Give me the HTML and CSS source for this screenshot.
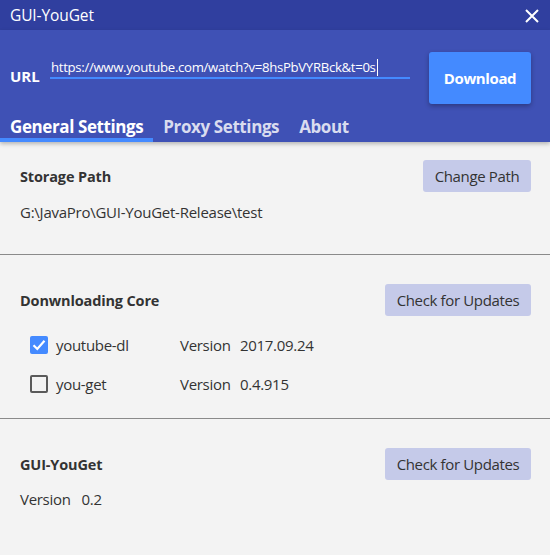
FILE: index.html
```html
<!DOCTYPE html>
<html>
<head>
<meta charset="utf-8">
<link rel="stylesheet" href="styles.css">
</head>
<body>
<div class="window">
  <div class="titlebar">
    <span class="title">GUI-YouGet</span>
    <svg class="close" width="14" height="14" viewBox="0 0 14 14"><path d="M1 1L13 13M13 1L1 13" stroke="#fff" stroke-width="2"/></svg>
  </div>
  <div class="header">
    <div class="url-row">
      <span class="url-label">URL</span>
      <div class="url-input"><span class="url-text">https://www.youtube.com/watch?v=8hsPbVYRBck&amp;t=0s</span><span class="caret"></span></div>
      <button class="download">Download</button>
    </div>
    <div class="tabs">
      <div class="tab active">General Settings</div>
      <div class="tab">Proxy Settings</div>
      <div class="tab">About</div>
    </div>
  </div>
  <div class="content">
    <section class="section s1">
      <div class="sec-head">
        <span class="sec-title">Storage Path</span>
        <button class="btn btn-path">Change Path</button>
      </div>
      <div class="path">G:\JavaPro\GUI-YouGet-Release\test</div>
    </section>
    <section class="section s2">
      <div class="sec-head">
        <span class="sec-title">Donwnloading Core</span>
        <button class="btn">Check for Updates</button>
      </div>
      <div class="core-row first">
        <span class="cb checked"><svg width="18" height="18" viewBox="0 0 18 18"><path d="M3.5 9.2L7.3 13L14.5 4.8" stroke="#fff" stroke-width="2.2" fill="none"/></svg></span>
        <span class="core-name">youtube-dl</span>
        <span class="ver-label">Version</span>
        <span class="ver">2017.09.24</span>
      </div>
      <div class="core-row">
        <span class="cb"></span>
        <span class="core-name">you-get</span>
        <span class="ver-label">Version</span>
        <span class="ver">0.4.915</span>
      </div>
    </section>
    <section class="section s3">
      <div class="sec-head">
        <span class="sec-title">GUI-YouGet</span>
        <button class="btn">Check for Updates</button>
      </div>
      <div class="app-ver"><span class="ver-label2">Version</span><span>0.2</span></div>
    </section>
  </div>
</div>
</body>
</html>
```
FILE: styles.css
```css
* { box-sizing: border-box; }
html, body { margin: 0; padding: 0; }
body {
  width: 550px;
  height: 555px;
  overflow: hidden;
  font-family: "Open Sans", "Noto Sans", sans-serif;
  background: #f3f3f3;
  color: #333;
}
.window { display: flex; flex-direction: column; height: 555px; }
.titlebar {
  height: 30px;
  background: #303f9f;
  display: flex;
  align-items: center;
  justify-content: space-between;
  padding: 0 11px 0 10px;
  color: #fff;
}
.title { font-size: 15.5px; letter-spacing: -0.1px; }
.close { display: block; margin-top: 1px; }
.header {
  background: #3f51b5;
  height: 112px;
  display: flex;
  flex-direction: column;
  box-shadow: 0 2px 4px rgba(0,0,0,0.25);
  position: relative;
  z-index: 1;
}
.url-row {
  display: flex;
  align-items: center;
  height: 52px;
  margin-top: 22px;
  padding: 0 19px 0 10px;
}
.url-label {
  color: #fff;
  font-weight: 700;
  font-size: 15px;
  width: 40px;
  margin-top: -4px;
}
.url-input {
  width: 360px;
  border-bottom: 2px solid #448aff;
  height: 22px;
  display: flex;
  align-items: center;
  margin-bottom: 20px;
  padding-left: 1px;
}
.url-text { color: #fff; font-size: 13.2px; letter-spacing: -0.32px; white-space: nowrap; }
.caret { display: inline-block; width: 1px; height: 17px; background: #fff; margin-left: 1px; }
.download {
  margin-left: auto;
  width: 102px;
  height: 52px;
  background: #448aff;
  border: none;
  border-radius: 3px;
  color: #fff;
  font-family: inherit;
  font-weight: 700;
  font-size: 15px;
  letter-spacing: -0.4px;
  box-shadow: 0 2px 5px rgba(0,0,0,0.3);
  padding: 0;
}
.tabs {
  display: flex;
  margin-top: auto;
  height: 38px;
}
.tab {
  font-weight: 700;
  font-size: 17px;
  letter-spacing: -0.4px;
  color: #d9dcef;
  padding: 11px 10px 0;
  height: 38px;
  line-height: 23px;
  white-space: nowrap;
}
.tab.active {
  color: #fff;
  border-bottom: 4px solid #448aff;
}
.content { flex: 1; display: flex; flex-direction: column; }
.section { padding: 0 19px 0 20px; }
.s1 { height: 113px; padding-top: 18px; border-bottom: 1px solid #8a8a8a; }
.s2 { height: 164px; padding-top: 29px; border-bottom: 1px solid #8a8a8a; }
.s3 { padding-top: 29px; }
.sec-head {
  display: flex;
  justify-content: space-between;
  align-items: center;
  height: 32px;
}
.sec-title { font-weight: 700; font-size: 14.5px; letter-spacing: -0.15px; color: #333; }
.btn {
  background: #c5cae9;
  border: none;
  border-radius: 3px;
  height: 32px;
  width: 146px;
  font-family: inherit;
  font-size: 15px;
  letter-spacing: -0.35px;
  color: #333;
  padding: 0;
}
.btn-path { width: 108px; }
.path { margin-top: 10px; font-size: 15px; letter-spacing: -0.25px; }
.core-row {
  display: flex;
  align-items: center;
  height: 39px;
  padding-left: 10px;
  font-size: 15px;
  letter-spacing: -0.3px;
}
.core-row.first { margin-top: 9px; }
.cb {
  width: 18px;
  height: 18px;
  border: 2px solid #5a5a5a;
  border-radius: 2px;
  display: flex;
  align-items: center;
  justify-content: center;
  flex: none;
}
.cb.checked { background: #448aff; border: none; }
.core-name { margin-left: 8px; width: 124px; }
.ver-label { width: 60px; }
.app-ver { margin-top: 9px; font-size: 15px; letter-spacing: -0.3px; }
.ver-label2 { margin-right: 11px; }
```
